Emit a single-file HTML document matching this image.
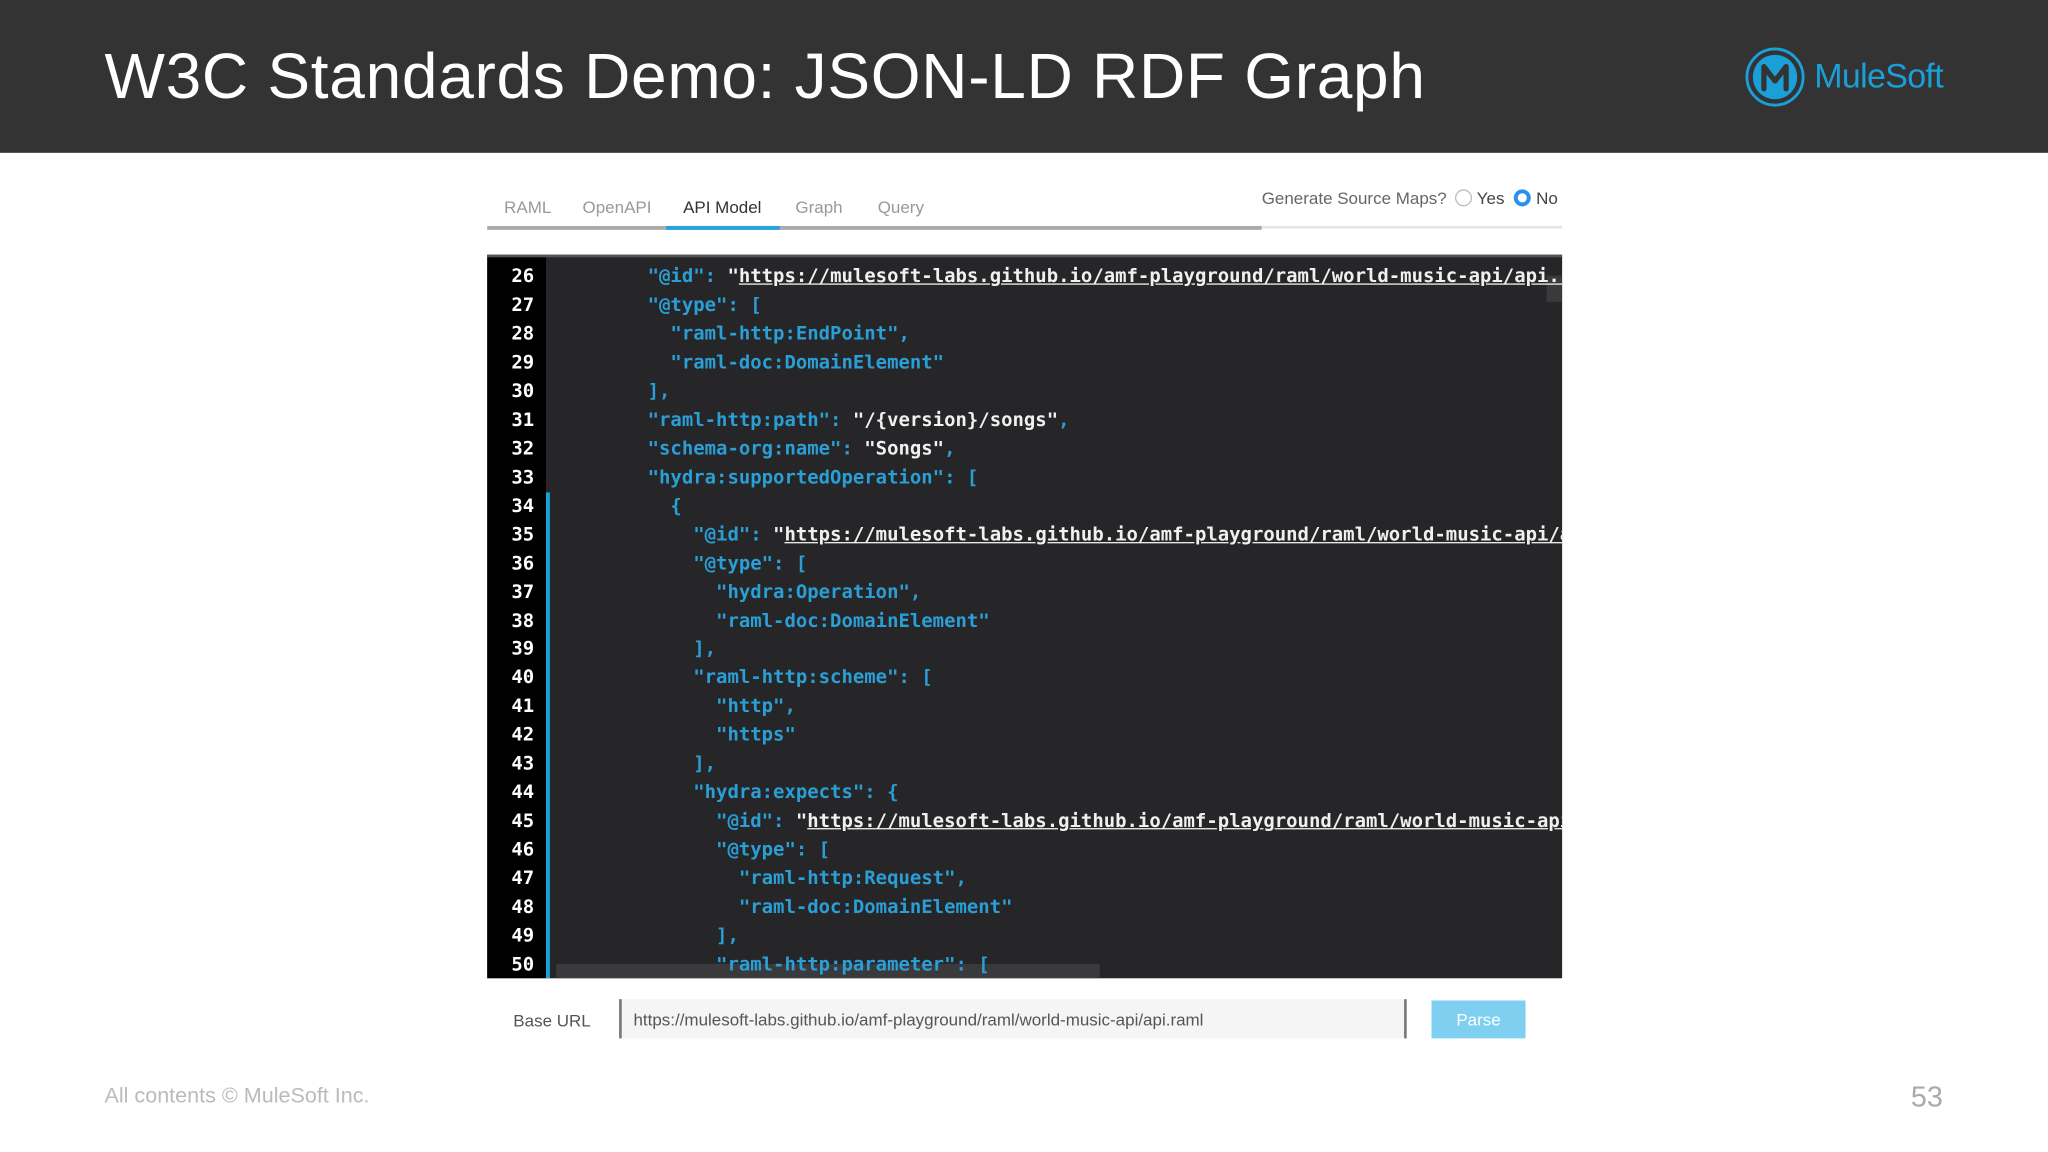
<!DOCTYPE html>
<html><head><meta charset="utf-8"><style>
html,body{margin:0;padding:0;width:2048px;height:1152px;overflow:hidden;background:#fff}
#w{position:absolute;left:0;top:0;width:1568px;height:882px;transform:scale(1.30612);transform-origin:0 0;font-family:"Liberation Sans",sans-serif}
.hdr{position:absolute;left:0;top:0;width:1568px;height:117px;background:#333333}
.title{position:absolute;left:80px;top:31px;font-size:49px;color:#fff;white-space:nowrap;letter-spacing:0.55px}
.logo{position:absolute;left:1336px;top:36px}
.ms{position:absolute;left:1389px;top:43px;font-size:26px;color:#1a9fd9;letter-spacing:-0.5px}
.tab{position:absolute;top:151px;font-size:13px;color:#999}
.bar{position:absolute;height:3px;top:173px}
.gsm{position:absolute;top:144px;left:966px;font-size:13px;color:#666;white-space:nowrap}
.code{position:absolute;left:373px;top:195px;width:823px;height:552px;background:#262628;overflow:hidden;border-top:2px solid #555}
.gut{position:absolute;left:0;top:0;width:45px;height:552px;background:#000}
.ln{position:absolute;left:0;width:36px;text-align:right;color:#fff;font:bold 14.5px "DejaVu Sans Mono",monospace}
.cl{position:absolute;left:53px;white-space:pre;font:bold 14.5px "DejaVu Sans Mono",monospace;color:#2a9fd6}
.s{color:#f0f0f0}
.u{color:#f0f0f0;text-decoration:underline}
</style></head><body><div id="w">
<div class="hdr"></div>
<div class="title">W3C Standards Demo: JSON-LD RDF Graph</div>
<svg class="logo" width="48" height="48" viewBox="0 0 48 48"><circle cx="23" cy="23" r="21.5" fill="none" stroke="#1a9fd9" stroke-width="2.2"/><circle cx="23" cy="23" r="17" fill="#1a9fd9"/><path d="M14.5 32 L14.5 15 L23 26 L31.5 15 L31.5 32" fill="none" stroke="#333" stroke-width="4" stroke-linejoin="round" stroke-linecap="round"/></svg>
<div class="ms">MuleSoft</div>

<div class="tab" style="left:386px">RAML</div>
<div class="tab" style="left:446px">OpenAPI</div>
<div class="tab" style="left:523px;color:#333">API Model</div>
<div class="tab" style="left:609px">Graph</div>
<div class="tab" style="left:672px">Query</div>
<div class="bar" style="left:373px;width:593px;background:#aaa"></div>
<div class="bar" style="left:510px;width:87px;background:#2aa3dc"></div>
<div class="bar" style="left:966px;width:230px;background:#e4e4e4;height:2px"></div>
<div class="gsm">Generate Source Maps? <span style="display:inline-block;width:11px;height:11px;border:1px solid #bbb;border-radius:50%;vertical-align:-2px;margin-left:3px"></span> <span style="color:#444">Yes</span> <span style="display:inline-block;width:7px;height:7px;border:3px solid #2a8ff0;background:#fff;border-radius:50%;vertical-align:-2px;margin-left:4px"></span> <span style="color:#444">No</span></div>

<div class="code">
<div class="gut"></div>
<div style="position:absolute;left:45px;top:180px;width:3px;height:372px;background:#1a9fd9"></div>
<div style="position:absolute;left:53px;top:541px;width:416px;height:11px;background:#3a3a3c"></div>
<div style="position:absolute;left:811px;top:14px;width:12px;height:20px;background:#3a3a3c"></div>
<div id="lines"></div>
</div>

<div style="position:absolute;left:393px;top:774px;font-size:13px;color:#555">Base URL</div>
<div style="position:absolute;left:474px;top:765px;width:603px;height:30px;background:#f5f5f5;border-left:2px solid #777;border-right:2px solid #777;box-sizing:border-box"></div>
<div style="position:absolute;left:485px;top:773px;font-size:13px;color:#555">https://mulesoft-labs.github.io/amf-playground/raml/world-music-api/api.raml</div>
<div style="position:absolute;left:1096px;top:766px;width:72px;height:29px;background:#7fcff0;color:#fff;font-size:13px;text-align:center;line-height:29px">Parse</div>

<div style="position:absolute;left:80px;top:830px;font-size:16.5px;color:#bbb;letter-spacing:0px">All contents © MuleSoft Inc.</div>
<div style="position:absolute;left:1463px;top:827px;font-size:22px;color:#aaa">53</div>
</div>
<script>
var L=[
'        "@id": "<u>https://mulesoft-labs.github.io/amf-playground/raml/world-music-api/api.raml#/</u>',
'        "@type": [',
'          "raml-http:EndPoint",',
'          "raml-doc:DomainElement"',
'        ],',
'        "raml-http:path": <s>"/{version}/songs"</s>,',
'        "schema-org:name": <s>"Songs"</s>,',
'        "hydra:supportedOperation": [',
'          {',
'            "@id": "<u>https://mulesoft-labs.github.io/amf-playground/raml/world-music-api/api.raml</u>',
'            "@type": [',
'              "hydra:Operation",',
'              "raml-doc:DomainElement"',
'            ],',
'            "raml-http:scheme": [',
'              "http",',
'              "https"',
'            ],',
'            "hydra:expects": {',
'              "@id": "<u>https://mulesoft-labs.github.io/amf-playground/raml/world-music-api/api</u>',
'              "@type": [',
'                "raml-http:Request",',
'                "raml-doc:DomainElement"',
'              ],',
'              "raml-http:parameter": ['];
var h='';
for(var i=0;i<L.length;i++){
 var t=15+i*21.96;
 var s=L[i].replace(/<s>(.*?)<\/s>/,'<span class="s">$1</span>');
 if(L[i].indexOf('<u>')>=0){s=L[i].replace(/"<u>(.*?)<\/u>/,'<span class="s">"</span><span class="u">$1</span>');}
 h+='<div class="ln" style="top:'+(t-8)+'px">'+(26+i)+'</div><div class="cl" style="top:'+(t-8)+'px">'+s+'</div>';
}
document.getElementById('lines').innerHTML=h;
</script>
</body></html>
